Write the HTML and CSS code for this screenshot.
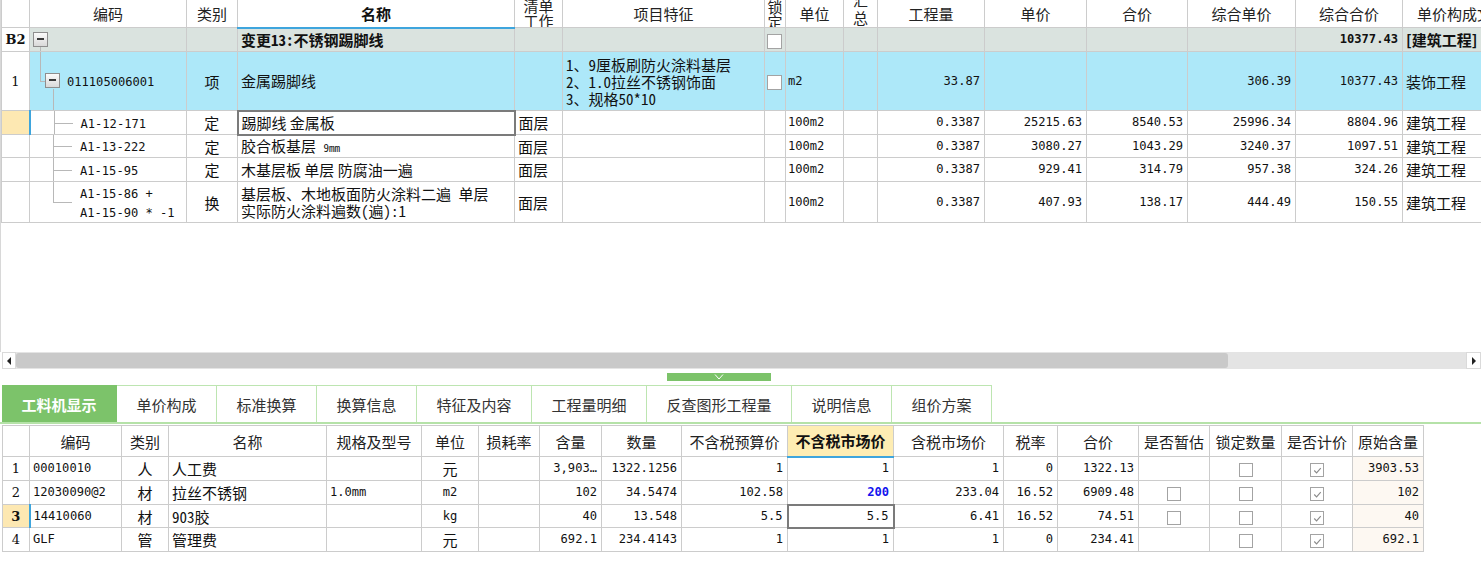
FILE: index.html
```html
<!DOCTYPE html>
<html lang="zh-CN">
<head>
<meta charset="utf-8">
<title>分部分项</title>
<link rel="stylesheet" href="styles.css">
</head>
<body>
<div class="app">
  <div class="top-pane">
    <table class="grid top">
      <colgroup>
        <col class="t0"><col class="t1"><col class="t2"><col class="t3"><col class="t4"><col class="t5"><col class="t6"><col class="t7"><col class="t8"><col class="t9"><col class="t10"><col class="t11"><col class="t12"><col class="t13"><col class="t14">
      </colgroup>
      <tr class="hdr">
        <th></th>
        <th>编码</th>
        <th>类别</th>
        <th class="sel-h">名称</th>
        <th><div class="vclip qd">清单<br>工作</div></th>
        <th>项目特征</th>
        <th><div class="vclip sd">锁<br>定</div></th>
        <th>单位</th>
        <th><div class="vclip hz">汇<br>总</div></th>
        <th>工程量</th>
        <th>单价</th>
        <th>合价</th>
        <th>综合单价</th>
        <th>综合合价</th>
        <th class="lft">单价构成文件</th>
      </tr>
      <tr class="r-b2">
        <td class="rh b">B2</td>
        <td class="tree"><span class="box b2box"></span><span class="v b2v"></span></td>
        <td></td>
        <td class="b mx">变更13:不锈钢踢脚线</td>
        <td></td>
        <td></td>
        <td class="lock"><span class="cb"></span></td>
        <td></td><td></td><td></td><td></td><td></td><td></td>
        <td class="n b">10377.43</td>
        <td class="b">[建筑工程]</td>
      </tr>
      <tr class="r-qd">
        <td class="rh">1</td>
        <td class="tree t-qd"><span class="v q-v1"></span><span class="h q-h"></span><span class="box qbox"></span><span class="v q-v2"></span><span class="code">011105006001</span></td>
        <td class="c">项</td>
        <td>金属踢脚线</td>
        <td></td>
        <td class="mx feat">1、9厘板刷防火涂料基层<br>2、1.0拉丝不锈钢饰面<br>3、规格50*10</td>
        <td class="lock"><span class="cb"></span></td>
        <td class="u">m2</td>
        <td></td>
        <td class="n">33.87</td>
        <td></td>
        <td></td>
        <td class="n">306.39</td>
        <td class="n">10377.43</td>
        <td>装饰工程</td>
      </tr>
      <tr class="r-de r24">
        <td class="rh cur"></td>
        <td class="tree t-de curcol"><span class="v d-v"></span><span class="h d-h"></span><span class="code">A1-12-171</span></td>
        <td class="c">定</td>
        <td class="selcell">踢脚线 金属板</td>
        <td>面层</td>
        <td></td>
        <td></td>
        <td class="u">100m2</td>
        <td></td>
        <td class="n">0.3387</td>
        <td class="n">25215.63</td>
        <td class="n">8540.53</td>
        <td class="n">25996.34</td>
        <td class="n">8804.96</td>
        <td>建筑工程</td>
      </tr>
      <tr class="r-de r23">
        <td class="rh"></td>
        <td class="tree t-de"><span class="v d-v"></span><span class="h d-h"></span><span class="code">A1-13-222</span></td>
        <td class="c">定</td>
        <td class="mx">胶合板基层 <span class="sm">9mm</span></td>
        <td>面层</td>
        <td></td>
        <td></td>
        <td class="u">100m2</td>
        <td></td>
        <td class="n">0.3387</td>
        <td class="n">3080.27</td>
        <td class="n">1043.29</td>
        <td class="n">3240.37</td>
        <td class="n">1097.51</td>
        <td>建筑工程</td>
      </tr>
      <tr class="r-de r24">
        <td class="rh"></td>
        <td class="tree t-de"><span class="v d-v"></span><span class="h d-h"></span><span class="code">A1-15-95</span></td>
        <td class="c">定</td>
        <td>木基层板 单层 防腐油一遍</td>
        <td>面层</td>
        <td></td>
        <td></td>
        <td class="u">100m2</td>
        <td></td>
        <td class="n">0.3387</td>
        <td class="n">929.41</td>
        <td class="n">314.79</td>
        <td class="n">957.38</td>
        <td class="n">324.26</td>
        <td>建筑工程</td>
      </tr>
      <tr class="r-de r41">
        <td class="rh"></td>
        <td class="tree t-de"><span class="v d-vl"></span><span class="h d-h"></span><span class="code two">A1-15-86 +<br>A1-15-90 * -1</span></td>
        <td class="c">换</td>
        <td class="mx two">基层板、木地板面防火涂料二遍 单层<br>实际防火涂料遍数(遍):1</td>
        <td>面层</td>
        <td></td>
        <td></td>
        <td class="u">100m2</td>
        <td></td>
        <td class="n">0.3387</td>
        <td class="n">407.93</td>
        <td class="n">138.17</td>
        <td class="n">444.49</td>
        <td class="n">150.55</td>
        <td>建筑工程</td>
      </tr>
    </table>
  </div>

  <div class="hscroll">
    <div class="sbtn"><span class="arr-l"></span></div>
    <div class="track"><div class="thumb"></div></div>
    <div class="sbtn"><span class="arr-r"></span></div>
  </div>

  <div class="splitter">
    <div class="handle">
      <svg width="10" height="6" viewBox="0 0 10 6"><path d="M1 0.5 L5 5 L9 0.5" fill="none" stroke="#ffffff" stroke-width="1"/></svg>
    </div>
  </div>

  <div class="tabs">
    <div class="tab active w115">工料机显示</div>
    <div class="tab w100">单价构成</div>
    <div class="tab w100">标准换算</div>
    <div class="tab w100">换算信息</div>
    <div class="tab w115">特征及内容</div>
    <div class="tab w115">工程量明细</div>
    <div class="tab w145">反查图形工程量</div>
    <div class="tab w100">说明信息</div>
    <div class="tab w100">组价方案</div>
  </div>

  <div class="bottom-pane">
    <table class="grid bottom">
      <colgroup>
        <col class="b0"><col class="b1"><col class="b2"><col class="b3"><col class="b4"><col class="b5"><col class="b6"><col class="b7"><col class="b8"><col class="b9"><col class="b10"><col class="b11"><col class="b12"><col class="b13"><col class="b14"><col class="b15"><col class="b16"><col class="b17">
      </colgroup>
      <tr class="bhdr">
        <th></th>
        <th>编码</th>
        <th>类别</th>
        <th>名称</th>
        <th>规格及型号</th>
        <th>单位</th>
        <th>损耗率</th>
        <th>含量</th>
        <th>数量</th>
        <th>不含税预算价</th>
        <th class="sel-h">不含税市场价</th>
        <th>含税市场价</th>
        <th>税率</th>
        <th>合价</th>
        <th>是否暂估</th>
        <th>锁定数量</th>
        <th>是否计价</th>
        <th>原始含量</th>
      </tr>
      <tr class="br24">
        <td class="rn">1</td>
        <td class="cd">00010010</td>
        <td class="c">人</td>
        <td>人工费</td>
        <td></td>
        <td class="c">元</td>
        <td></td>
        <td class="n">3,903…</td>
        <td class="n">1322.1256</td>
        <td class="n">1</td>
        <td class="n">1</td>
        <td class="n">1</td>
        <td class="n">0</td>
        <td class="n">1322.13</td>
        <td></td>
        <td class="c"><span class="cb"></span></td>
        <td class="c"><span class="cb on"><svg viewBox="0 0 14 14"><path d="M3.5 7 L6 9.5 L10.5 4.5" fill="none" stroke="#8a8a8a" stroke-width="1.2"/></svg></span></td>
        <td class="n orig">3903.53</td>
      </tr>
      <tr class="br24">
        <td class="rn">2</td>
        <td class="cd">12030090@2</td>
        <td class="c">材</td>
        <td>拉丝不锈钢</td>
        <td class="cd">1.0mm</td>
        <td class="c m">m2</td>
        <td></td>
        <td class="n">102</td>
        <td class="n">34.5474</td>
        <td class="n">102.58</td>
        <td class="n blue">200</td>
        <td class="n">233.04</td>
        <td class="n">16.52</td>
        <td class="n">6909.48</td>
        <td class="c"><span class="cb"></span></td>
        <td class="c"><span class="cb"></span></td>
        <td class="c"><span class="cb on"><svg viewBox="0 0 14 14"><path d="M3.5 7 L6 9.5 L10.5 4.5" fill="none" stroke="#8a8a8a" stroke-width="1.2"/></svg></span></td>
        <td class="n orig">102</td>
      </tr>
      <tr class="br23">
        <td class="rn cur b">3</td>
        <td class="cd curcol">14410060</td>
        <td class="c">材</td>
        <td class="mx">903胶</td>
        <td></td>
        <td class="c m">kg</td>
        <td></td>
        <td class="n">40</td>
        <td class="n">13.548</td>
        <td class="n">5.5</td>
        <td class="n selcell">5.5</td>
        <td class="n">6.41</td>
        <td class="n">16.52</td>
        <td class="n">74.51</td>
        <td class="c"><span class="cb"></span></td>
        <td class="c"><span class="cb"></span></td>
        <td class="c"><span class="cb on"><svg viewBox="0 0 14 14"><path d="M3.5 7 L6 9.5 L10.5 4.5" fill="none" stroke="#8a8a8a" stroke-width="1.2"/></svg></span></td>
        <td class="n orig">40</td>
      </tr>
      <tr class="br24">
        <td class="rn">4</td>
        <td class="cd">GLF</td>
        <td class="c">管</td>
        <td>管理费</td>
        <td></td>
        <td class="c">元</td>
        <td></td>
        <td class="n">692.1</td>
        <td class="n">234.4143</td>
        <td class="n">1</td>
        <td class="n">1</td>
        <td class="n">1</td>
        <td class="n">0</td>
        <td class="n">234.41</td>
        <td></td>
        <td class="c"><span class="cb"></span></td>
        <td class="c"><span class="cb on"><svg viewBox="0 0 14 14"><path d="M3.5 7 L6 9.5 L10.5 4.5" fill="none" stroke="#8a8a8a" stroke-width="1.2"/></svg></span></td>
        <td class="n orig">692.1</td>
      </tr>
    </table>
  </div>
</div>
</body>
</html>
```

FILE: styles.css
```css
* { box-sizing: border-box; }
html, body { margin: 0; padding: 0; background: #ffffff; }
body {
  width: 1481px;
  height: 581px;
  overflow: hidden;
  font-family: "Noto Sans CJK SC", sans-serif;
  font-size: 15px;
  color: #111111;
}
.app { width: 1481px; }

/* ---------- grids ---------- */
.grid {
  border-collapse: collapse;
  table-layout: fixed;
}
.grid th, .grid td {
  border: 1px solid #cccccc;
  padding: 0 3px;
  white-space: nowrap;
  overflow: hidden;
  font-weight: normal;
  line-height: 17px;
  vertical-align: middle;
  text-align: left;
}
.grid th { text-align: center; color: #222222; }

.n {
  text-align: right !important;
  font-family: "DejaVu Sans Mono", "Liberation Mono", monospace;
  font-size: 12.1px;
  padding-right: 4px !important;
}
.u, .cd, .code, .m {
  font-family: "DejaVu Sans Mono", "Liberation Mono", monospace;
  font-size: 12.1px;
}
.c { text-align: center !important; }
.b { font-weight: bold !important; }
.mx { font-family: "Noto Sans Mono CJK SC", "Noto Sans CJK SC", sans-serif; }
.sm { font-size: 11px; }

.sel-h {
  background: #feedb3;
  font-weight: bold !important;
  color: #111111 !important;
  border-bottom: 2px solid #3ea5dd !important;
}
.selcell { border: 2px solid #7b7b7b !important; }
.cur { background: #fde8b2 !important; }
.curcol { border-left: 2px solid #3ea5dd !important; }

/* ---------- top grid ---------- */
.top-pane {
  height: 352px;
  overflow: hidden;
  border-left: 1px solid #d8d8d8;
}
.top { width: 1521px; }
.top .t0 { width: 28px; }
.top .t1 { width: 157px; }
.top .t2 { width: 51px; }
.top .t3 { width: 277px; }
.top .t4 { width: 48px; }
.top .t5 { width: 202px; }
.top .t6 { width: 21px; }
.top .t7 { width: 58px; }
.top .t8 { width: 34px; }
.top .t9 { width: 107px; }
.top .t10 { width: 102px; }
.top .t11 { width: 101px; }
.top .t12 { width: 108px; }
.top .t13 { width: 107px; }
.top .t14 { width: 120px; }

.top tr.hdr { height: 27px; }
.top tr.hdr th { border-top: none; padding: 0; background: #ffffff; }
.top tr.hdr th.lft { text-align: left; padding-left: 14px; }
.vclip {
  height: 27px;
  overflow: hidden;
  line-height: 15px;
}
.qd { margin-top: -2px; height: 29px; }
.sd { margin-top: -1px; height: 28px; line-height: 15px; }
.hz { line-height: 18px; margin-top: -9px; height: 36px; }

.r-b2 { height: 24px; }
.r-b2 td { background: #dae3df; }
.r-qd { height: 59px; }
.r-qd td { background: #ade8f9; }
.r24 { height: 24px; }
.r23 { height: 23px; }
.r41 { height: 41px; }
.top td.rh { background: #ffffff; text-align: center; padding: 0; font-family: "DejaVu Serif", "Liberation Serif", serif; font-size: 13px; }
.top td.rh.cur { background: #fde8b2; }

.feat { line-height: 17px; padding-top: 2px; }
.two { line-height: 16px; }
.lock { padding: 0 0 0 2px !important; }
.u { padding-left: 2px !important; }

/* tree */
.tree { position: relative; }
.tree .v { position: absolute; width: 1px; background: #b8b8b8; }
.tree .h { position: absolute; height: 1px; background: #b8b8b8; }
.box {
  position: absolute;
  width: 15px;
  height: 15px;
  border: 1px solid #8e8e8e;
  background: linear-gradient(#fbfbfb, #d9d9d9);
}
.box::after {
  content: "";
  position: absolute;
  left: 3px;
  right: 3px;
  top: 5px;
  height: 2px;
  background: #3a3a3a;
}
.b2box { left: 3px; top: 4px; }
.b2v { left: 10px; top: 19px; bottom: 0; }
.t-qd { padding-left: 37px !important; }
.q-v1 { left: 10px; top: 0; height: 29px; }
.q-h { left: 10px; top: 29px; width: 6px; }
.qbox { left: 15px; top: 21px; }
.q-v2 { left: 23px; top: 37px; bottom: 0; }
.t-de { padding-left: 50px !important; }
.d-v { left: 23px; top: 0; bottom: 0; }
.d-vl { left: 23px; top: 0; height: 50%; }
.d-h { left: 23px; top: 50%; width: 19px; }

/* checkbox */
.cb {
  display: inline-block;
  width: 15px;
  height: 15px;
  border: 1px solid #a3a3a3;
  background: #ffffff;
  vertical-align: middle;
  position: relative;
}
.cb.on svg { position: absolute; left: 0; top: 0; width: 13px; height: 13px; }

/* ---------- scrollbar ---------- */
.hscroll {
  height: 17px;
  display: flex;
  padding-left: 2px;
  background: #ffffff;
}
.sbtn {
  width: 14px;
  height: 17px;
  background: #ffffff;
  border: 1px solid #dadada;
  display: flex;
  align-items: center;
  justify-content: center;
}
.hscroll .sbtn:last-child { width: 15px; }
.arr-l {
  width: 0; height: 0;
  border-top: 4px solid transparent;
  border-bottom: 4px solid transparent;
  border-right: 4px solid #222222;
}
.arr-r {
  width: 0; height: 0;
  border-top: 4px solid transparent;
  border-bottom: 4px solid transparent;
  border-left: 4px solid #222222;
}
.track {
  flex: 1;
  background: #e4e4e4;
  padding: 1px 0;
}
.thumb {
  width: 1212px;
  height: 15px;
  background: #c9c9c9;
  border-radius: 3px;
}

/* ---------- splitter ---------- */
.splitter {
  height: 16px;
  padding-top: 4px;
}
.handle {
  width: 104px;
  height: 8px;
  margin-left: 667px;
  background: #7cc36a;
  display: flex;
  justify-content: center;
  align-items: flex-start;
}
.handle svg { display: block; margin-top: 1px; }

/* ---------- tabs ---------- */
.tabs {
  display: flex;
  height: 39px;
  padding-left: 2px;
  border-bottom: 2px solid #b5e2a8;
}
.tab {
  height: 37px;
  border: 1px solid #bde5b1;
  border-left: none;
  border-bottom: none;
  display: flex;
  align-items: center;
  justify-content: center;
  color: #333333;
  font-size: 15px;
  background: #ffffff;
}
.tab.active {
  background: #7cc36a;
  border-color: #7cc36a;
  color: #ffffff;
  font-weight: bold;
}
.w100 { width: 100px; }
.w115 { width: 115px; }
.w145 { width: 145px; }

/* ---------- bottom grid ---------- */
.bottom-pane { padding-top: 1px; padding-left: 2px; }
.bottom { width: 1421px; }
.bottom .b0 { width: 27px; }
.bottom .b1 { width: 92px; }
.bottom .b2 { width: 47px; }
.bottom .b3 { width: 158px; }
.bottom .b4 { width: 95px; }
.bottom .b5 { width: 57px; }
.bottom .b6 { width: 61px; }
.bottom .b7 { width: 62px; }
.bottom .b8 { width: 80px; }
.bottom .b9 { width: 106px; }
.bottom .b10 { width: 106px; }
.bottom .b11 { width: 110px; }
.bottom .b12 { width: 54px; }
.bottom .b13 { width: 81px; }
.bottom .b14 { width: 71px; }
.bottom .b15 { width: 72px; }
.bottom .b16 { width: 71px; }
.bottom .b17 { width: 71px; }
.bhdr { height: 31px; }
.bhdr th { padding: 0 1px; }
.br24 { height: 24px; }
.br23 { height: 23px; }
.rn {
  text-align: center !important;
  padding: 0 !important;
  font-family: "DejaVu Serif", "Liberation Serif", serif;
  font-size: 13px;
}
.orig { background: #fdf8f2; }
.blue { color: #1414ee !important; font-weight: bold !important; }
.bottom .cb { width: 14px; height: 14px; }
```
